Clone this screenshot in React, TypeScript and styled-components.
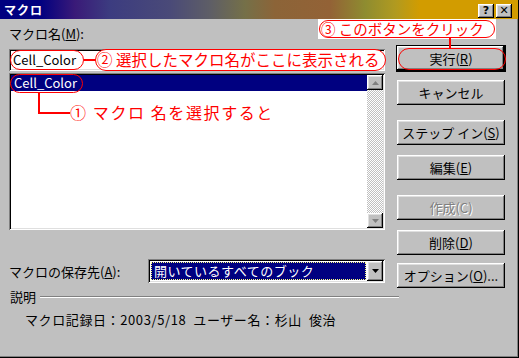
import { FC } from 'react';
import styled, { createGlobalStyle, css } from 'styled-components';

const Global = createGlobalStyle`
  html, body { margin: 0; padding: 0; background: #c0c0c0; }
  body { font-family: "Noto Sans CJK JP", "Liberation Sans", sans-serif; font-size: 12px; }
`;

const raised = css`
  box-shadow: inset -1px -1px #000, inset 1px 1px #fff, inset -2px -2px #808080, inset 2px 2px #dfdfdf;
`;
const sunken = css`
  box-shadow: inset 1px 1px #808080, inset -1px -1px #fff, inset 2px 2px #000, inset -2px -2px #dfdfdf;
`;

const Window = styled.div`
  position: relative;
  width: 519px;
  height: 358px;
  box-sizing: border-box;
  background: #c0c0c0;
  border-right: 1px solid #000;
  border-bottom: 1px solid #000;
  box-shadow: inset -1px -1px #808080, inset -2px -2px #c0c0c0;
  overflow: hidden;
  color: #000;
`;

const TitleBar = styled.div`
  height: 19px;
  display: flex;
  align-items: center;
  justify-content: space-between;
  padding: 0 6px 0 4px;
  background: linear-gradient(90deg, #000080 0px, #000080 40px, #3a1a78 75px, #3c3c80 110px,
    #4a4a78 170px, #5e5e66 210px, #757048 245px, #8c6438 275px, #936236 330px,
    #8e8c30 365px, #b09a20 395px, #d29c00 420px, #d29c00 519px);
`;

const Title = styled.span`
  color: #fff;
  font-weight: bold;
  font-size: 12px;
  letter-spacing: 1px;
`;

const TitleButtons = styled.div`
  display: flex;
  gap: 2px;
  margin-top: 2px;
`;

const TitleButton = styled.div`
  width: 16px;
  height: 14px;
  background: #c0c0c0;
  ${raised};
  display: flex;
  align-items: center;
  justify-content: center;
  font: bold 11px "DejaVu Sans", sans-serif;
  line-height: 1;
`;

const Body = styled.div`
  display: flex;
  padding: 0 0 0 9px;
  gap: 12px;
`;

const LeftCol = styled.div`
  width: 376px;
  display: flex;
  flex-direction: column;
`;

const Label = styled.div`
  height: 30px;
  line-height: 14px;
  padding-top: 8px;
  box-sizing: border-box;
  white-space: nowrap;
  font-size: 13px;
`;

const TextField = styled.div`
  height: 22px;
  background: #fff;
  ${sunken};
  padding: 0 4px;
  line-height: 22px;
  font-size: 13px;
`;

const List = styled.div`
  margin-top: 2px;
  height: 157px;
  background: #fff;
  ${sunken};
  padding: 2px;
  box-sizing: border-box;
  display: flex;
`;

const ListItems = styled.div`
  flex: 1;
`;

const ListItem = styled.div<{ $selected?: boolean }>`
  height: 16px;
  line-height: 16px;
  padding: 0 3px;
  font-size: 13px;
  background: ${p => (p.$selected ? '#000080' : 'transparent')};
  color: ${p => (p.$selected ? '#fff' : '#000')};
`;

const ScrollBar = styled.div`
  width: 16px;
  display: flex;
  flex-direction: column;
  justify-content: space-between;
  background-color: #fff;
  background-image: repeating-conic-gradient(#c0c0c0 0 25%, #fff 0 50%);
  background-size: 2px 2px;
`;

const ScrollButton = styled.div`
  width: 16px;
  height: 15px;
  background: #c0c0c0;
  ${raised};
  display: flex;
  align-items: center;
  justify-content: center;
`;

const StoreRow = styled.div`
  margin-top: 29px;
  display: flex;
  align-items: center;
  height: 24px;
`;

const StoreLabel = styled.div`
  width: 139px;
  white-space: nowrap;
  font-size: 13px;
`;

const Combo = styled.div`
  width: 237px;
  height: 24px;
  box-sizing: border-box;
  background: #fff;
  ${sunken};
  padding: 2px;
  display: flex;
`;

const ComboValue = styled.div`
  flex: 1;
  margin: 1px;
  background: #000080;
  color: #fff;
  outline: 1px dotted #ffff80;
  outline-offset: -1px;
  line-height: 18px;
  padding-left: 3px;
  font-size: 13px;
  letter-spacing: 0.5px;
`;

const ComboButton = styled(ScrollButton)`
  height: 20px;
`;

const RightCol = styled.div`
  width: 108px;
  display: flex;
  flex-direction: column;
  padding-top: 27px;
`;

const Button = styled.div<{ $default?: boolean; $disabled?: boolean; $gap?: number }>`
  height: 25px;
  margin-top: ${p => p.$gap ?? 0}px;
  box-sizing: border-box;
  background: #c0c0c0;
  ${raised};
  display: flex;
  align-items: center;
  justify-content: center;
  font-size: 13px;
  white-space: nowrap;
  ${p => p.$default && css`
    outline: 1px solid #000;
    box-shadow: inset -2px -2px #000, inset 1px 1px #fff, inset -3px -3px #808080, inset 2px 2px #dfdfdf;
  `}
  ${p => p.$disabled && css`
    color: #808080;
    text-shadow: 1px 1px #fff;
  `}
`;

const Section = styled.div`
  display: flex;
  align-items: center;
  gap: 4px;
  margin: 4px 0 0 1px;
  width: 389px;
  font-size: 13px;
`;

const Rule = styled.div`
  flex: 1;
  height: 0;
  border-top: 1px solid #808080;
  border-bottom: 1px solid #fff;
  margin-top: 1px;
`;

const Desc = styled.div`
  margin: 4px 0 0 16px;
  font-size: 13px;
  letter-spacing: 0.6px;
  white-space: pre;
`;

/* --- red annotations overlaid on the dialog --- */
const Note = styled.div<{ $x: number; $y: number; $w: number; $h: number; $bg?: boolean; $size?: number }>`
  position: absolute;
  left: ${p => p.$x}px;
  top: ${p => p.$y}px;
  width: ${p => p.$w}px;
  height: ${p => p.$h}px;
  box-sizing: border-box;
  border: 1.5px solid #ff0000;
  border-radius: ${p => p.$h / 2}px;
  background: ${p => (p.$bg ? '#fff' : 'transparent')};
  color: #ff0000;
  font-size: ${p => p.$size ?? 16}px;
  line-height: ${p => p.$h - 3}px;
  white-space: nowrap;
  padding-left: 1px;
`;

const WhitePad = styled.div<{ $x: number; $y: number; $w: number; $h: number }>`
  position: absolute;
  left: ${p => p.$x}px;
  top: ${p => p.$y}px;
  width: ${p => p.$w}px;
  height: ${p => p.$h}px;
  background: #fff;
`;

const Line = styled.div<{ $x: number; $y: number; $w: number; $h: number }>`
  position: absolute;
  left: ${p => p.$x}px;
  top: ${p => p.$y}px;
  width: ${p => p.$w}px;
  height: ${p => p.$h}px;
  background: #ff0000;
`;

const NoteText = styled.div<{ $x: number; $y: number }>`
  position: absolute;
  left: ${p => p.$x}px;
  top: ${p => p.$y}px;
  color: #ff0000;
  font-size: 16px;
  line-height: 20px;
  letter-spacing: 1.6px;
  white-space: nowrap;
`;

const Arrow: FC<{ up?: boolean; gray?: boolean }> = ({ up, gray }) => (
  <svg width="7" height="4" viewBox="0 0 7 4">
    <polygon points={up ? '3.5,0 7,4 0,4' : '0,0 7,0 3.5,4'} fill={gray ? '#808080' : '#000'} />
  </svg>
);

export default function App() {
  return (
    <>
      <Global />
      <Window>
        <TitleBar>
          <Title>マクロ</Title>
          <TitleButtons>
            <TitleButton>?</TitleButton>
            <TitleButton>✕</TitleButton>
          </TitleButtons>
        </TitleBar>
        <Body>
          <LeftCol>
            <Label>マクロ名(<u>M</u>):</Label>
            <TextField>Cell_Color</TextField>
            <List>
              <ListItems>
                <ListItem $selected>Cell_Color</ListItem>
              </ListItems>
              <ScrollBar>
                <ScrollButton><Arrow up gray /></ScrollButton>
                <ScrollButton><Arrow gray /></ScrollButton>
              </ScrollBar>
            </List>
            <StoreRow>
              <StoreLabel>マクロの保存先(<u>A</u>):</StoreLabel>
              <Combo>
                <ComboValue>開いているすべてのブック</ComboValue>
                <ComboButton><Arrow /></ComboButton>
              </Combo>
            </StoreRow>
            <Section>
              説明
              <Rule />
            </Section>
            <Desc>マクロ記録日：2003/5/18  ユーザー名：杉山  俊治</Desc>
          </LeftCol>
          <RightCol>
            <Button $default>実行(<u>R</u>)</Button>
            <Button $gap={9}>キャンセル</Button>
            <Button $gap={15}>ステップ イン(<u>S</u>)</Button>
            <Button $gap={10}>編集(<u>E</u>)</Button>
            <Button $gap={15} $disabled>作成(C)</Button>
            <Button $gap={10}>削除(<u>D</u>)</Button>
            <Button $gap={8}>オプション(<u>O</u>)...</Button>
          </RightCol>
        </Body>

        <Note $x={10} $y={50} $w={74} $h={20} />
        <Line $x={84} $y={59} $w={12} $h={1.5} />
        <Note $x={95} $y={49} $w={291} $h={22} $bg $size={15.5}>② 選択したマクロ名がここに表示される</Note>

        <WhitePad $x={318} $y={19} $w={178} $h={20} />
        <Note $x={319} $y={20} $w={176} $h={18} $size={14.5}>③ このボタンをクリック</Note>
        <Line $x={449} $y={38} $w={1.5} $h={10} />
        <Note $x={398} $y={48} $w={108} $h={22} />

        <Note $x={10} $y={74} $w={73} $h={19} />
        <Line $x={38} $y={93} $w={1.5} $h={20} />
        <Line $x={38} $y={112} $w={32} $h={1.5} />
        <NoteText $x={70} $y={102}>① マクロ 名を選択すると</NoteText>
      </Window>
    </>
  );
}
